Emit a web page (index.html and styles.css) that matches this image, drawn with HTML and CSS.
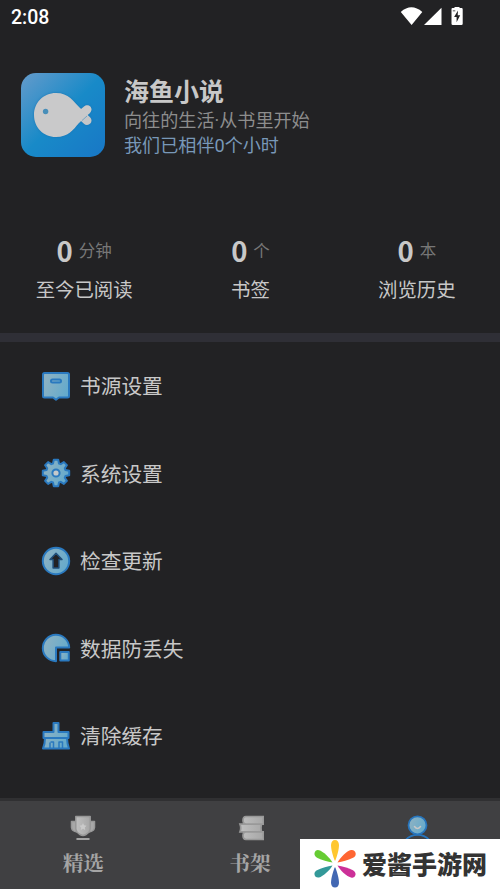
FILE: index.html
```html
<!DOCTYPE html>
<html lang="zh-CN">
<head>
<meta charset="utf-8">
<title>海鱼小说</title>
<link rel="stylesheet" href="styles.css">
</head>
<body>
<svg class="defs" aria-hidden="true">
  <defs>
    <linearGradient id="tile" x1="0" y1="0" x2="1" y2="1"><stop offset="0" stop-color="#659bcb"/><stop offset=".5" stop-color="#188ac8"/><stop offset="1" stop-color="#1877c6"/></linearGradient>
    <linearGradient id="ice" x1="0" y1=".3" x2="1" y2=".7"><stop offset="0" stop-color="#8eb2c2"/><stop offset="1" stop-color="#62aacd"/></linearGradient>
    <linearGradient id="silver" x1="0" y1="0" x2="1" y2="0"><stop offset="0" stop-color="#c0c0c0"/><stop offset="1" stop-color="#a6a6a6"/></linearGradient>
  </defs>
</svg>
<div class="screen">
  <header class="status">
    <span class="clock">2:08</span>
    <svg width="64" height="20" viewBox="0 0 64 20">
      <path fill="#fff" d="M.8 5.900Q11.300-3.400 22.300 5.900L11.600 19ZM41.500 1.800V19H24ZM52.500 2h2V.9h5V2h2q1.200 0 1.200 1.200v14.500q0 1.300-1.300 1.300h-8.600q-1.300 0-1.300-1.300V3.200Q51.500 2 52.500 2Z"/>
      <path fill="#222224" d="M58 4.500 54.100 11h2.500v5.200L60.200 9.300h-2.500ZM52.800 4.500h2.500v.7h-2.500Z"/>
    </svg>
  </header>

  <section class="profile">
    <svg class="logo" width="84" height="84" viewBox="0 0 84 84">
      <rect width="84" height="84" rx="15" fill="url(#tile)"/>
      <g class="fish">
        <path fill="none" stroke="#c5c6c8" stroke-width="9" stroke-linecap="round" d="M58 40 66 47.500"/>
        <path fill="#c9c9ca" d="M35 20C48 20 52 28 60 36L63 33.500C66 30.500 71 33 70.500 37C70 40 67 41.500 65 43.500L58 50C52 57 47 64 35 64C22 64 13 54 13 42S22 20 35 20Z"/>
      </g>
      <path fill="none" stroke="#6fa3c4" stroke-width=".9" d="M61 47.500 66 43"/>
      <circle cx="24.600" cy="38.500" r="2.700" fill="#478eb9"/>
    </svg>
    <div class="who">
      <h1>海鱼小说</h1>
      <p>向往的生活·从书里开始</p>
      <p class="together">我们已相伴0个小时</p>
    </div>
  </section>

  <section class="stats">
    <div class="stat"><div class="num"><b>0</b><span>分钟</span></div><div class="label">至今已阅读</div></div>
    <div class="stat"><div class="num"><b>0</b><span>个</span></div><div class="label">书签</div></div>
    <div class="stat"><div class="num"><b>0</b><span>本</span></div><div class="label">浏览历史</div></div>
  </section>

  <main class="menu">
    <div class="item">
      <svg class="ico" viewBox="0 0 30 30"><path d="M3.500 2h23q1.500 0 1.500 1.500V25q0 1.500-1.500 1.500H18L15 28.700 12 26.500H3.500Q2 26.500 2 25V3.500Q2 2 3.500 2Z"/><rect x="10" y="8.500" width="10" height="3" rx="1.500"/></svg>
      <span>书源设置</span>
    </div>
    <div class="item">
      <svg class="ico" viewBox="0 0 30 30"><path d="m12.800 1.800h4.400l.8 3.700 1.700.7 3.200-2.100 3 3-2.100 3.200.7 1.700 3.700.8v4.400l-3.700.8-.7 1.700 2.100 3.200-3 3-3.200-2.100-1.700.7-.8 3.700h-4.400l-.8-3.700-1.700-.7-3.200 2.100-3-3 2.100-3.200-.7-1.700-3.700-.8v-4.400l3.700-.8.7-1.700-2.100-3.200 3-3 3.200 2.100 1.700-.7Z"/><circle class="hub" cx="15" cy="15" r="3.600"/></svg>
      <span>系统设置</span>
    </div>
    <div class="item">
      <svg class="ico" viewBox="0 0 30 30"><circle cx="15" cy="15" r="13.200"/><path class="arrow" d="M15 7.300 21 13.500H17.900V22H12.100V13.500H9Z"/></svg>
      <span>检查更新</span>
    </div>
    <div class="item">
      <svg class="ico" viewBox="0 0 30 30"><path d="M28.200 14.500A13.200 13.200 0 1 0 15 28.200V14.500Z"/><rect x="19.300" y="19" width="8.500" height="8.500"/></svg>
      <span>数据防丢失</span>
    </div>
    <div class="item">
      <svg class="ico" viewBox="0 0 30 30"><path d="M12.500 2h5v9H27.500v6h-25v-6h10ZM4 17h22q.2 6 2 10.500H2Q4 23 4 17Z"/><path class="line" d="M9 27v-5.500M9.500 21h3v6M18 27v-6h3.500v6"/></svg>
      <span>清除缓存</span>
    </div>
  </main>

  <nav class="tabs">
    <div class="tab">
      <svg width="28" height="28" viewBox="0 0 28 28"><g stroke="#989898" stroke-width="1.500" stroke-linejoin="round"><path fill="#a8a8a8" d="M7 7.500H2.500v6q.5 4 5.500 4.500M21 7.500h4.500v6q-.5 4-5.500 4.500"/><path fill="url(#silver)" d="M6.800 2.500h14.400v12.500q-.5 3.500-4.200 5.500-3 1.800-6 0-3.700-2-4.200-5.500Z"/></g><path fill="#cacaca" d="m14 9 1.100 2.300 2.500.4-1.800 1.700.4 2.600L14 14.800 11.800 16l.4-2.600-1.800-1.700 2.500-.4Z"/><path stroke="#a4a4a4" stroke-width="2.200" stroke-linecap="round" d="M8.300 25h11.400"/></svg>
      <span>精选</span>
    </div>
    <div class="tab">
      <svg width="28" height="28" viewBox="-2 0 28 28"><g fill="url(#silver)" stroke="#999" stroke-width="1.700"><path d="M26 2.500H8Q5 2.500 5 6.300T8 10.200H26Q24.500 6.200 26 2.500ZM2 10.200H23.500Q22.500 14 23.500 17.800H2Q3.500 14 2 10.200ZM26 17.800H8Q5 17.800 5 21.500T8 25.500H26Q24.500 21.500 26 17.800Z"/></g></svg>
      <span>书架</span>
    </div>
    <div class="tab">
      <svg width="28" height="28" viewBox="0 0 28 28"><path fill="none" stroke="#2775bd" stroke-width="1.800" d="M2.500 26Q7.500 20.800 14.500 20.800T26.500 26"/><circle cx="14.500" cy="11.300" r="9" fill="url(#ice)" stroke="#2775bd" stroke-width="1.800"/><path fill="none" stroke="#c8c8c8" stroke-width="1.500" stroke-linecap="round" d="M11.500 12.500q3 4 6 0"/></svg>
    </div>
  </nav>
</div>

<aside class="watermark">
  <svg width="44" height="50" viewBox="0 0 44 50">
    <path fill="#ffc72f" d="M22 22C20.500 19 18 11 18 6Q18.500 1 22 1T26 6C26 11 23.500 19 22 22Z"/>
    <path fill="#f63" d="M24.500 23.500C27 19 34 11.500 38 11Q42 10.500 42.700 14.500 43 17.500 39.500 19C35 21 29.500 23 24.500 23.500Z"/>
    <path fill="#cc3098" d="M24.500 26.500C29.500 27 35 29 39.500 31Q43 33 42.500 36 41.500 39.500 38 38.500C33 37 27 31 24.500 26.500Z"/>
    <path fill="#4268b3" d="M22 28C23.500 31 26 39 26 44Q25.500 48.500 22 48.500T18 44C18 39 20.500 31 22 28Z"/>
    <path fill="#339999" d="M19.500 26.500C17 31 10 37.500 6 38.500Q2 39 1.500 35.500 1 32.500 4.500 31C9 29 14.500 27 19.500 26.500Z"/>
    <path fill="#66cc33" d="M19.500 23.500C14.500 23 9 21 4.500 19Q1 17 1.500 14 2.500 10.500 6 11.200C10 12 17 19 19.500 23.500Z"/>
  </svg>
  <span>爱酱手游网</span>
</aside>
</body>
</html>
```

FILE: styles.css
```css
* { box-sizing: border-box; margin: 0; padding: 0; }

body {
  width: 500px;
  height: 889px;
  overflow: hidden;
  background: #222224;
  color: #c8c8c8;
  font-family: Roboto, "Noto Sans CJK SC", sans-serif;
}

svg { display: block; flex: none; }
.defs { position: absolute; width: 0; height: 0; }

.screen { display: flex; flex-direction: column; height: 889px; }

.status {
  display: flex;
  justify-content: space-between;
  height: 73px;
  padding: 6px 36px 0 11px;
}
.clock { font-size: 19.5px; line-height: 23px; font-weight: 500; color: #fff; }

.profile { display: flex; gap: 19px; height: 157px; padding-left: 21px; }
.fish { filter: drop-shadow(0 0 1px #1774b4); }
.who { padding-top: 4px; }
.who h1 { font-size: 25px; line-height: 31px; font-weight: 700; }
.who p { font-size: 18.1px; line-height: 25px; color: #8d8d8d; white-space: nowrap; }
.who .together { color: #7898b8; }

.stats {
  display: grid;
  grid-template-columns: repeat(3, 1fr);
  height: 112px;
  padding: 5px 0 0 1px;
  border-bottom: 9px solid #2f2f36;
  text-align: center;
}
.num { display: flex; justify-content: center; align-items: center; gap: 6px; height: 33px; }
.num b { padding-bottom: 2px; font: 700 27.5px/33px "Noto Sans CJK SC", sans-serif; }
.num span { font-size: 16.5px; line-height: 33px; color: #777; }
.label { margin-top: 8px; font-size: 19.4px; line-height: 29px; }

.menu { flex: 1; }
.item {
  display: flex;
  align-items: center;
  gap: 9px;
  height: 87.5px;
  padding-left: 41px;
  font-size: 20.7px;
}
.item span { padding-bottom: 1.5px; }
.ico {
  width: 30px;
  height: 30px;
  fill: url(#ice);
  stroke: #2a79bf;
  stroke-width: 2;
  stroke-linejoin: round;
}
.ico .line { fill: none; stroke-width: 1.5; }
.ico .hub { fill: #c5c9cb; }
.ico .arrow { fill: #222224; stroke: #204f79; stroke-width: 1.5; }

.tabs {
  display: grid;
  grid-template-columns: repeat(3, 1fr);
  height: 91px;
  padding-top: 13px;
  background: #404042;
  border-top: 3px solid #303032;
}
.tab {
  display: flex;
  flex-direction: column;
  align-items: center;
  color: #a5a5a5;
  font: 700 20.7px/28px "Noto Serif CJK SC", "Noto Serif SC", "Noto Sans CJK SC", serif;
}
.tab span { margin-top: 6px; }

.watermark {
  position: absolute;
  left: 300px;
  top: 839px;
  display: flex;
  align-items: center;
  gap: 5px;
  width: 200px;
  height: 50px;
  padding-left: 13px;
  background: #fff;
  color: #333;
  font: 900 25px/50px "Noto Sans CJK SC", sans-serif;
}
.watermark span { padding-bottom: 2px; }
```
